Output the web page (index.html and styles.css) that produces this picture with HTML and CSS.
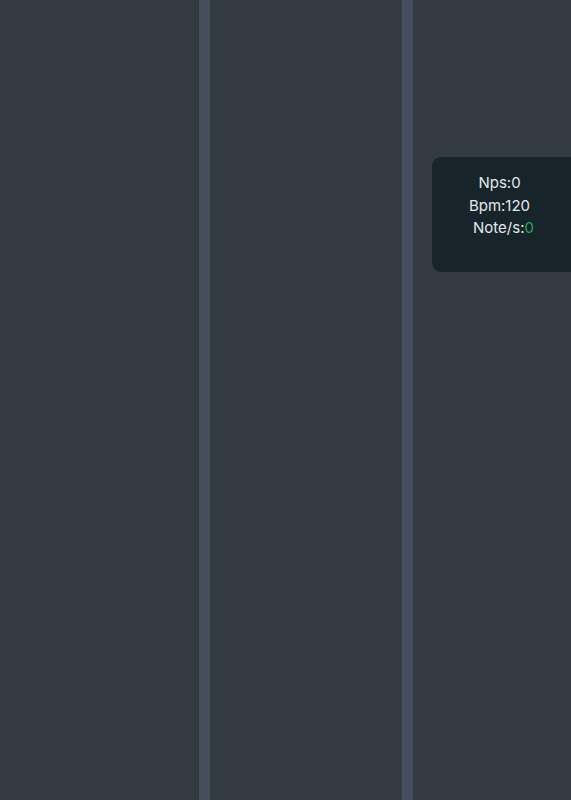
FILE: index.html
```html
<!DOCTYPE html>
<html lang="en">
<head>
<meta charset="utf-8">
<title>Lanes</title>
<link rel="stylesheet" href="styles.css">
</head>
<body>
  <div class="board">
    <div class="lane lane-a"></div>
    <div class="divider"></div>
    <div class="lane lane-b"></div>
    <div class="divider"></div>
    <div class="lane lane-c"></div>
  </div>
  <div class="stats">
    <div class="stat">Nps:0</div>
    <div class="stat">Bpm:120</div>
    <div class="stat stat-rate">Note/s:<span class="live">0</span></div>
  </div>
</body>
</html>
```
FILE: styles.css
```css
html, body {
  margin: 0;
  padding: 0;
  height: 100%;
  background: #333a42;
  overflow: hidden;
}

.board {
  display: flex;
  height: 100vh;
}

.lane {
  background: #333a42;
}

.lane-a { width: 199px; }
.lane-b { width: 192px; }
.lane-c { flex: 1; }

.divider {
  width: 11px;
  background: #464e5d;
}

.stats {
  position: absolute;
  top: 157px;
  left: 432px;
  width: 150px;
  height: 115px;
  box-sizing: border-box;
  padding-top: 15px;
  padding-right: 15px;
  background: #17242a;
  border-radius: 9px;
  font-family: Inter, "Liberation Sans", sans-serif;
  font-size: 15px;
  line-height: 22.5px;
  color: #e3e8ee;
  text-align: center;
}

.stat-rate {
  padding-left: 8px;
}

.live {
  color: #22a55a;
}
```
